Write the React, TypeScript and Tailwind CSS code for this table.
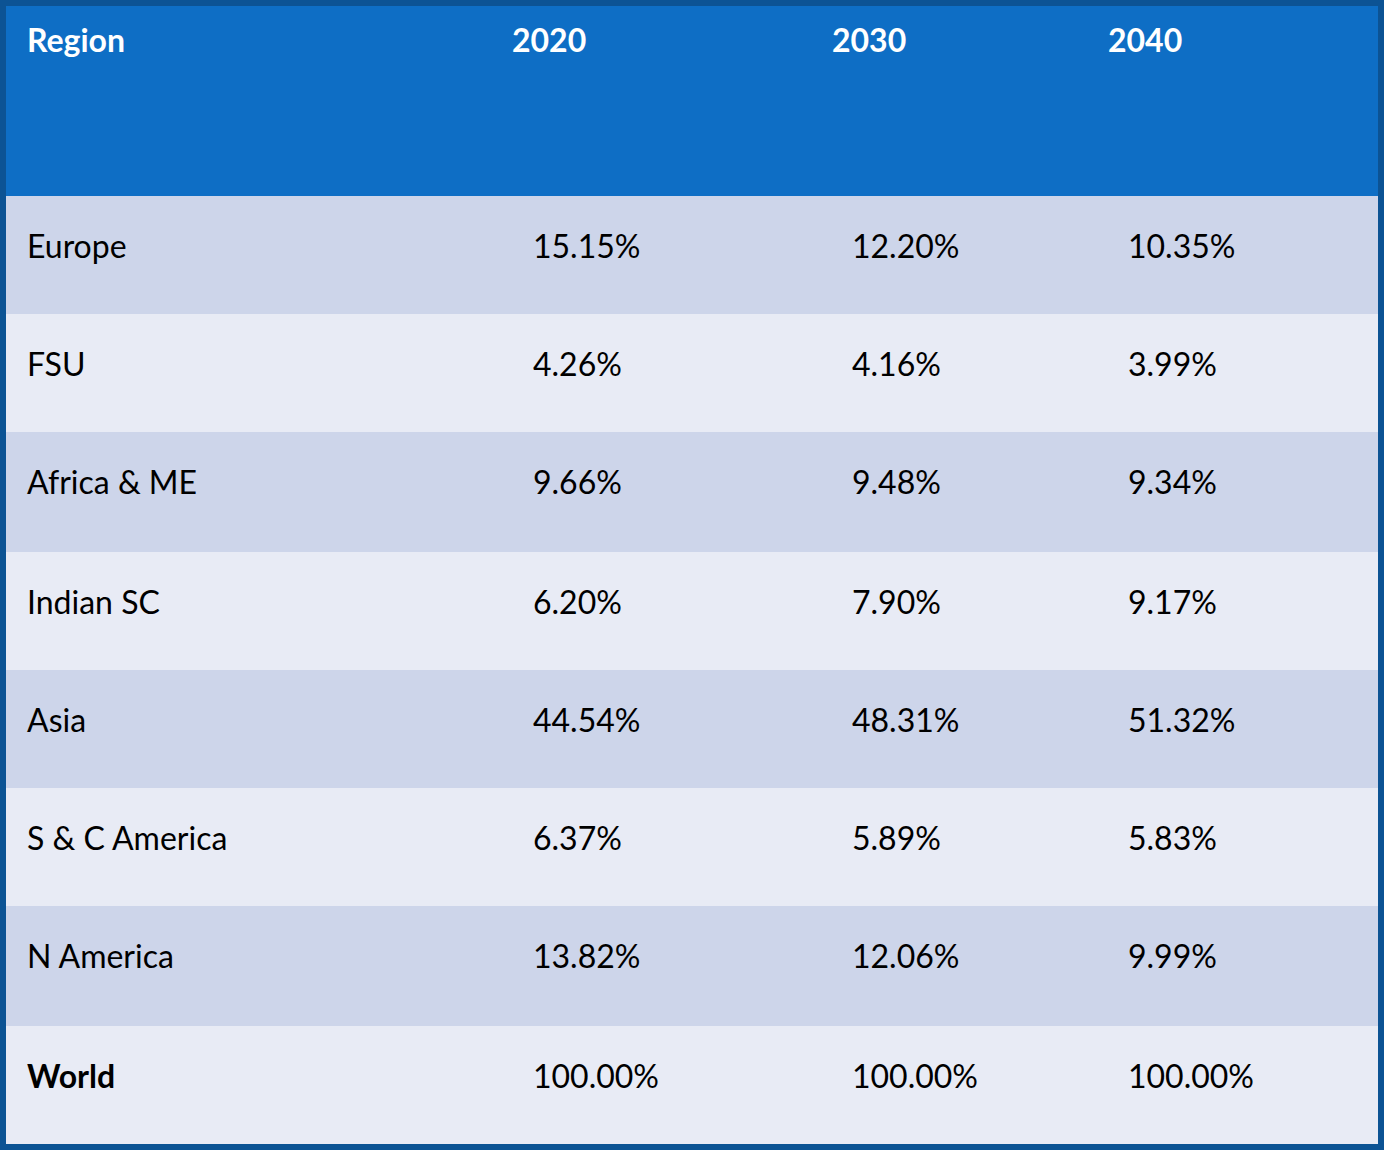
import React from "react";

const rows: [string, string, string, string][] = [
  ["Europe", "15.15%", "12.20%", "10.35%"],
  ["FSU", "4.26%", "4.16%", "3.99%"],
  ["Africa & ME", "9.66%", "9.48%", "9.34%"],
  ["Indian SC", "6.20%", "7.90%", "9.17%"],
  ["Asia", "44.54%", "48.31%", "51.32%"],
  ["S & C America", "6.37%", "5.89%", "5.83%"],
  ["N America", "13.82%", "12.06%", "9.99%"],
  ["World", "100.00%", "100.00%", "100.00%"],
];

const heights = ["h-[118px]", "h-[118px]", "h-[120px]", "h-[118px]", "h-[118px]", "h-[118px]", "h-[120px]", "h-[118px]"];

export default function App() {
  return (
    <div
      className="w-[1384px] h-[1150px] bg-[#0c5394] p-[6px]"
      style={{ fontFamily: "Lato, 'Open Sans', sans-serif" }}
    >
      <div className="w-[1372px] h-[1138px] flex flex-col">
        <div className="grid grid-cols-[485px_320px_276px_291px] h-[190px] bg-[#0e6ec5] text-white font-bold text-[32px] leading-[38px] pt-[15px]">
          <div className="pl-[21px]">Region</div>
          <div className="pl-[21px]">2020</div>
          <div className="pl-[21px]">2030</div>
          <div className="pl-[21px]">2040</div>
        </div>
        {rows.map((r, i) => (
          <div
            key={r[0]}
            className={`grid grid-cols-[485px_320px_276px_291px] ${heights[i]} ${
              i % 2 === 0 ? "bg-[#cdd5ea]" : "bg-[#e8ebf5]"
            } text-black text-[32px] leading-[38px] pt-[31px]`}
          >
            <div className={`pl-[21px] ${r[0] === "World" ? "font-bold" : ""}`}>{r[0]}</div>
            <div className="pl-[42px]">{r[1]}</div>
            <div className="pl-[41px]">{r[2]}</div>
            <div className="pl-[41px]">{r[3]}</div>
          </div>
        ))}
      </div>
    </div>
  );
}
